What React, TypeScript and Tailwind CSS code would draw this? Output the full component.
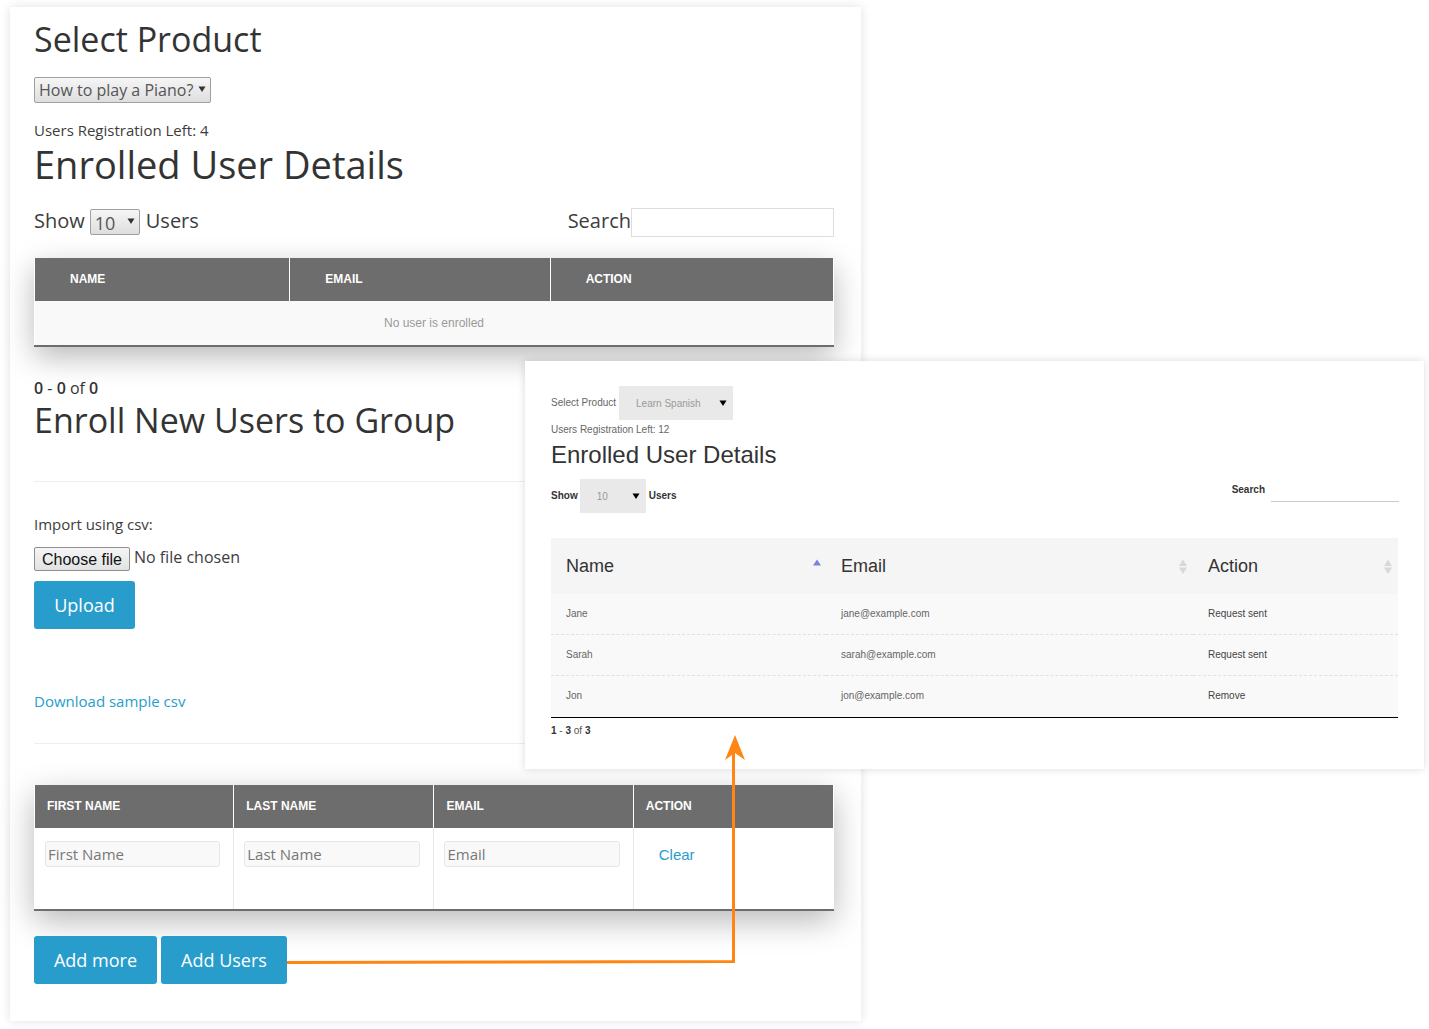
import React from "react";

const Caret = ({ className }: { className: string }) => (
  <svg className={className} viewBox="0 0 8 8" width="8" height="8"><path d="M0.5 1.5H7.5L4 7Z" fill="currentColor" /></svg>
);

const Sort = ({ active }: { active?: boolean }) => active ? (
  <svg width="10" height="8" viewBox="0 0 10 8" className="absolute right-[4px] top-[21px]"><path d="M5 0.5L9 6.5H1Z" fill="#7f7fe0" /></svg>
) : (
  <svg width="10" height="16" viewBox="0 0 10 16" className="absolute right-[5px] top-[21px]"><path d="M5 0.5L9 7H1Z M1 8.5H9L5 15Z" fill="#d8d8d8" /></svg>
);

const NativeSelect = ({ value, w, arrowRight, cls }: { value: string; w: string; arrowRight: string; cls: string }) => (
  <span className={`relative inline-block ${w} ${cls}`}>
    <select defaultValue={value} className="block h-full w-full appearance-none rounded-[2px] border border-[#a0a0a0] bg-gradient-to-b from-[#f6f6f6] to-[#dedede] pb-[1px] pl-[4px] text-[#555]">
      <option>{value}</option>
    </select>
    <Caret className={`pointer-events-none absolute top-[8px] text-[#333] ${arrowRight}`} />
  </span>
);

const Th = ({ children, w, pl, last }: { children: string; w: string; pl: string; last?: boolean }) => (
  <th className={`h-[43px] ${w} ${pl} bg-[#6d6d6d] pb-[1px] text-left align-middle text-[12px] font-bold uppercase text-white ${last ? "" : "border-r border-white"}`} style={{ fontFamily: '"Liberation Sans", Arial, sans-serif' }}>{children}</th>
);

const Btn = ({ children, w }: { children: string; w: string }) => (
  <button className={`h-[48px] ${w} rounded-[3px] bg-[#289dcc] text-[18px] text-white`}>{children}</button>
);

const Field = ({ ph, w }: { ph: string; w: string }) => (
  <input placeholder={ph} className={`block h-[26px] ${w} rounded-[3px] border border-[#e6e6e6] bg-[#f9f9f9] px-[2px] text-[15px] placeholder:text-[#777]`} />
);

const rows = [
  { c: ["Jane", "jane@example.com", "Request sent"], cls: "h-[40px] border-b border-dashed border-[#e0e0e0]", td: "pl-[15px]" },
  { c: ["Sarah", "sarah@example.com", "Request sent"], cls: "h-[41px] border-b border-dashed border-[#e0e0e0]", td: "pl-[15px]" },
  { c: ["Jon", "jon@example.com", "Remove"], cls: "h-[42px]", td: "pb-[2px] pl-[15px]" },
];

export default function App() {
  return (
    <div className="relative h-[1029px] w-[1429px] overflow-hidden bg-white text-[#3d3d3d]" style={{ fontFamily: '"Open Sans", sans-serif' }}>
      <div className="absolute left-[10px] top-[7px] h-[1014px] w-[851px] bg-white px-[24px] pr-[27px] shadow-[0_0_10px_rgba(0,0,0,0.12)]">
        <h1 className="pt-[12px] text-[34px] leading-[40px] text-[#333]">Select Product</h1>
        <NativeSelect value="How to play a Piano?" w="w-[177px]" arrowRight="right-[5px]" cls="mt-[18px] h-[26px] text-[16px] align-top" />
        <p className="mt-[18px] h-[19px] text-[15px] leading-[19px]">Users Registration Left: 4</p>
        <h2 className="mt-[1px] h-[46px] text-[38px] leading-[46px] text-[#333]">Enrolled User Details</h2>
        <div className="mt-[21px] flex h-[29px] items-center justify-between text-[20px]">
          <div className="flex items-center">
            <span className="mb-[3px]">Show</span>
            <NativeSelect value="10" w="w-[50px]" arrowRight="right-[5px]" cls="ml-[5px] mr-[6px] mb-[2px] h-[26px] text-[18px]" />
            <span className="mb-[3px]">Users</span>
          </div>
          <div className="flex items-center">
            <span className="mb-[3px]">Search</span>
            <input className="h-[29px] w-[203px] border border-[#ddd] bg-white" />
          </div>
        </div>
        <div className="mt-[21px] w-[800px] shadow-[0_10px_30px_rgba(0,0,0,0.28)]">
          <table className="w-full table-fixed border-collapse border-x border-b-2 border-x-white border-b-[#6d6d6d]">
            <thead>
              <tr>
                <Th w="w-[255px]" pl="pl-[35px]">Name</Th>
                <Th w="w-[260px]" pl="pl-[35px]">Email</Th>
                <Th w="w-[283px]" pl="pl-[35px]" last>Action</Th>
              </tr>
            </thead>
            <tbody>
              <tr>
                <td colSpan={3} className="h-[45px] bg-[#f9f9f9] text-center text-[12px] text-[#999]" style={{ fontFamily: '"Liberation Sans", Arial, sans-serif' }}>No user is enrolled</td>
              </tr>
            </tbody>
          </table>
        </div>
        <p className="mt-[32px] h-[19px] text-[16px] leading-[19px] text-[#333]"><b className="font-semibold">0</b> - <b className="font-semibold">0</b> of <b className="font-semibold">0</b></p>
        <h2 className="h-[44px] text-[34px] leading-[44px] text-[#333]">Enroll New Users to Group</h2>
        <hr className="mt-[39px] border-[#eee]" />
        <p className="mt-[33px] h-[19px] text-[15px] leading-[19px]">Import using csv:</p>
        <div className="mt-[13px] flex h-[24px] items-center">
          <button className="h-[24px] w-[96px] rounded-[2px] border border-[#8f8f8f] bg-gradient-to-b from-[#f5f5f5] to-[#e2e2e2] pb-[1px] text-[16px] text-[#111]" style={{ fontFamily: '"Liberation Sans", Arial, sans-serif' }}>Choose file</button>
          <span className="ml-[4px] mb-[4px] text-[16px]">No file chosen</span>
        </div>
        <div className="mt-[10px]"><Btn w="w-[101px]">Upload</Btn></div>
        <a className="mt-[63px] block h-[19px] text-[15px] leading-[19px] text-[#289dcc]">Download sample csv</a>
        <hr className="mt-[32px] border-[#eee]" />
        <div className="mt-[41px] w-[800px] shadow-[0_10px_30px_rgba(0,0,0,0.28)]">
          <table className="w-full table-fixed border-collapse border-x border-b-2 border-x-white border-b-[#6d6d6d]">
            <thead>
              <tr>
                <Th w="w-[199px]" pl="pl-[12px]">First Name</Th>
                <Th w="w-[200px]" pl="pl-[12px]">Last Name</Th>
                <Th w="w-[199px]" pl="pl-[12px]">Email</Th>
                <Th w="w-[200px]" pl="pl-[12px]" last>Action</Th>
              </tr>
            </thead>
            <tbody>
              <tr className="h-[82px] align-top">
                <td className="border-r border-[#e8e8e8] pl-[10px] pt-[13px]"><Field ph="First Name" w="w-[175px]" /></td>
                <td className="border-r border-[#e8e8e8] pl-[10px] pt-[13px]"><Field ph="Last Name" w="w-[176px]" /></td>
                <td className="border-r border-[#e8e8e8] pl-[10px] pt-[13px]"><Field ph="Email" w="w-[176px]" /></td>
                <td className="pl-[25px] pt-[16px] text-[15px] leading-[22px] text-[#289dcc]" style={{ fontFamily: '"Liberation Sans", Arial, sans-serif' }}>Clear</td>
              </tr>
            </tbody>
          </table>
        </div>
        <div className="mt-[25px] flex gap-[4px]">
          <Btn w="w-[123px]">Add more</Btn>
          <Btn w="w-[126px]">Add Users</Btn>
        </div>
      </div>

      <div className="absolute left-[525px] top-[361px] h-[408px] w-[899px] bg-white px-[26px] shadow-[0_0_8px_rgba(0,0,0,0.14)]" style={{ fontFamily: '"Liberation Sans", Arial, sans-serif' }}>
        <div className="mt-[25px] flex h-[34px] items-center text-[10px] text-[#666]">
          <span className="mb-[2px]">Select Product</span>
          <div className="relative ml-[3px] flex h-[34px] w-[114px] items-center bg-[#e9e9e9] pl-[17px] text-[#999]">
            Learn Spanish
            <Caret className="absolute right-[6px] top-[13px] text-black" />
          </div>
        </div>
        <p className="mt-[4px] h-[12px] text-[10px] leading-[12px] text-[#666]">Users Registration Left: 12</p>
        <h2 className="mt-[5px] h-[28px] text-[24px] leading-[28px] text-[#333]">Enrolled User Details</h2>
        <div className="mt-[10px] flex h-[34px] items-start justify-between text-[10px] font-bold text-[#333]">
          <div className="flex h-[34px] items-center">
            <span className="mb-[2px]">Show</span>
            <div className="relative mx-[2px] flex h-[34px] w-[66px] items-center bg-[#e9e9e9] pl-[17px] font-normal text-[#999]">
              10
              <Caret className="absolute right-[6px] top-[13px] text-black" />
            </div>
            <span className="mb-[2px] ml-[1px]">Users</span>
          </div>
          <div className="-mr-[1px] flex items-center">
            <span className="mb-[2px] mr-[6px]">Search</span>
            <div className="h-[23px] w-[128px] border-b border-[#ccc]" />
          </div>
        </div>
        <div className="relative mt-[25px] w-[847px]">
          <table className="w-full table-fixed border-collapse border-b border-black text-left">
            <thead>
              <tr className="h-[56px] bg-[#f5f5f5] text-[18px] font-normal text-[#333]">
                <th className="relative w-[275px] pl-[15px] font-normal">Name<Sort active /></th>
                <th className="relative w-[367px] pl-[15px] font-normal">Email<Sort /></th>
                <th className="relative pl-[15px] font-normal">Action<Sort /></th>
              </tr>
            </thead>
            <tbody className="text-[10px] text-[#666]">
              {rows.map((r) => (
                <tr key={r.c[0]} className={`bg-[#f9f9f9] ${r.cls}`}>
                  <td className={r.td}>{r.c[0]}</td>
                  <td className={r.td}>{r.c[1]}</td>
                  <td className={`${r.td} text-[#444]`}>{r.c[2]}</td>
                </tr>
              ))}
            </tbody>
          </table>
        </div>
        <p className="mt-[7px] h-[12px] text-[10px] leading-[12px] text-[#555]"><b className="text-[#333]">1</b> - <b className="text-[#333]">3</b> of <b className="text-[#333]">3</b></p>
      </div>

      <svg className="pointer-events-none absolute left-0 top-0" width="1429" height="1029" viewBox="0 0 1429 1029">
        <path d="M287 962.5L733.5 961.5V750" fill="none" stroke="#ff8614" strokeWidth="3" />
        <path d="M735 735L745 760L735 753L725 760Z" fill="#ff8614" />
      </svg>
    </div>
  );
}
